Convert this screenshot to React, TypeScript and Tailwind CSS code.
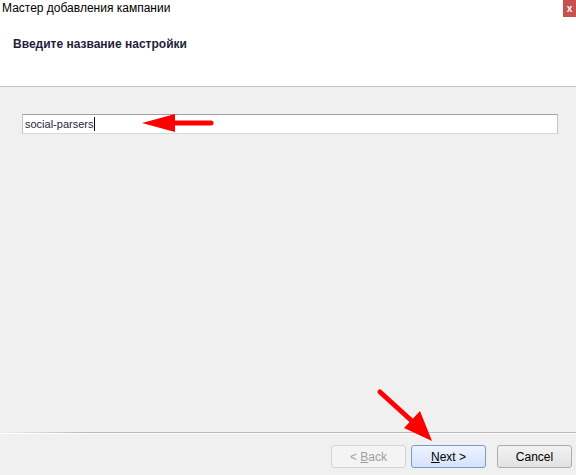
import React from "react";

const font = { fontFamily: "'Liberation Sans', Arial, sans-serif" };

export default function App() {
    return (
        <div
            className="relative flex h-[475px] w-[576px] flex-col overflow-hidden bg-[#f0f0f0] text-[12px]"
            style={font}
        >
            {/* Title + header */}
            <div className="flex h-[86px] flex-col bg-white">
                <div className="flex h-[17px] items-start justify-between">
                    <span className="pl-[2px] pt-[1px] text-[12px] leading-[14px] text-black">
                        Мастер добавления кампании
                    </span>
                    <div className="flex h-[17px] w-[13px] items-center justify-center bg-[#c75050] text-[10px] font-bold leading-none text-white">
                        x
                    </div>
                </div>
                <div className="pl-[13px] pt-[20px] text-[12px] font-bold leading-[14px] text-[#1e1e3c]">
                    Введите название настройки
                </div>
            </div>
            <div className="h-px bg-[#c4c4cc]" />

            {/* Body */}
            <div className="flex-1 px-[22px] pt-[27px] pr-[18px]">
                <div className="flex h-[20px] items-center border border-t-[#a0a0a8] border-l-[#c4c4cc] border-r-[#c4c4cc] border-b-[#d8d8de] bg-white pl-[2px] text-[11px] text-[#1e1e3c]">
                    social-parsers
                    <span className="ml-px inline-block h-[14px] w-px bg-black" />
                </div>
            </div>

            {/* Footer */}
            <div className="h-px bg-gradient-to-r from-[#f0f0f0] via-[#b8b8c0] via-[15%] to-[#b8b8c0]" />
            <div className="h-px bg-white" />
            <div className="flex justify-end gap-[5px] pb-[7px] pr-[4px] pt-[11px]">
                <button className="h-[23px] w-[75px] rounded-[3px] border border-[#d4d4d8] bg-[#f4f4f4] text-[12px] text-[#a0a0a0]">
                    &lt; <span className="underline">B</span>ack
                </button>
                <button className="h-[23px] w-[75px] rounded-[3px] border border-[#7a9cc8] bg-gradient-to-b from-[#eef3ff] to-[#d6e2fb] text-[12px] text-black">
                    <span className="underline">N</span>ext &gt;
                </button>
                <button className="ml-[6px] h-[23px] w-[75px] rounded-[3px] border border-[#acacac] bg-gradient-to-b from-[#f2f2f2] to-[#e2e2e2] text-[12px] text-black">
                    Cancel
                </button>
            </div>

            {/* Red annotation arrows */}
            <svg
                className="pointer-events-none absolute inset-0"
                width="576"
                height="475"
                viewBox="0 0 576 475"
            >
                <line x1="174" y1="123" x2="211" y2="123" stroke="#ff0000" strokeWidth="5" strokeLinecap="round" />
                <polygon points="142,123 175,114 175,132" fill="#ff0000" />
                <line x1="380" y1="392" x2="413" y2="422" stroke="#ff0000" strokeWidth="5" strokeLinecap="round" />
                <polygon points="432,441 404,428 420,411" fill="#ff0000" />
            </svg>
        </div>
    );
}
